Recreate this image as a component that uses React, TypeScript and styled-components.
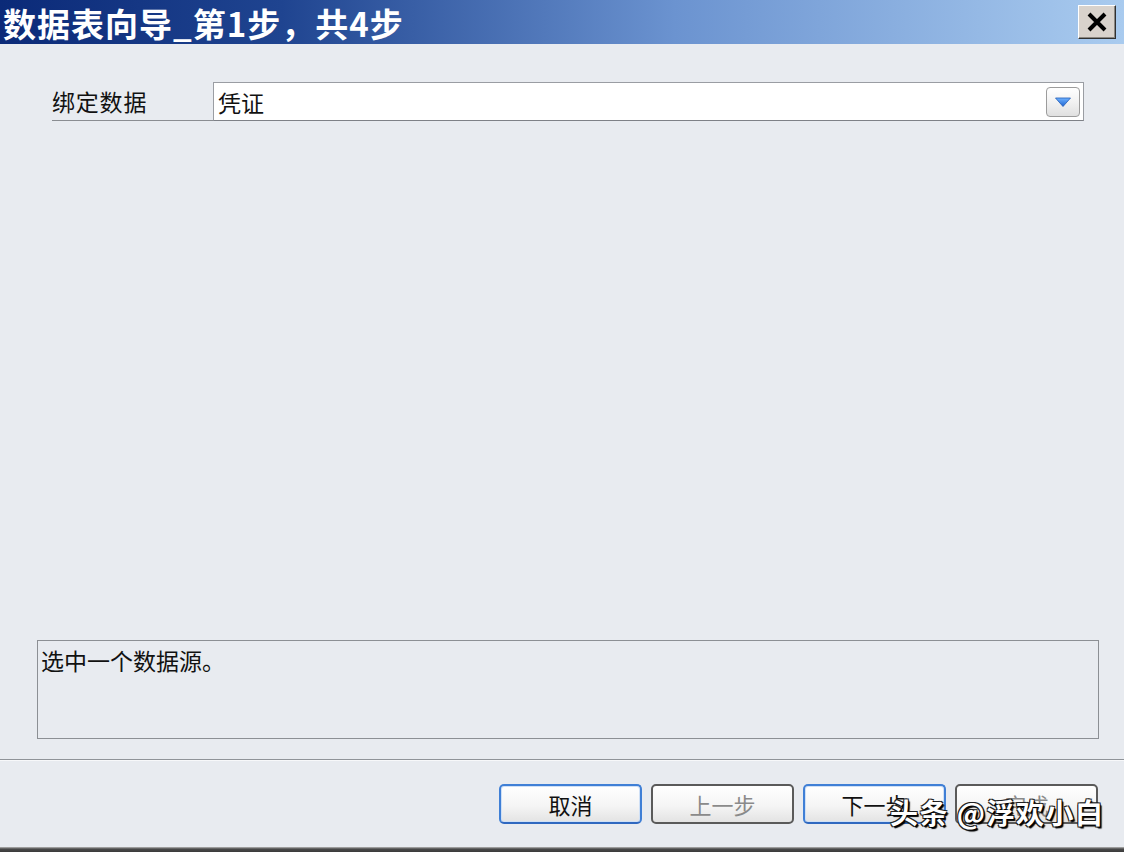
import React from "react";
import styled, { createGlobalStyle, css } from "styled-components";

const GlobalStyle = createGlobalStyle`
  html, body { margin: 0; padding: 0; }
  body {
    font-family: "Noto Sans CJK SC", "Noto Sans", sans-serif;
    background: #e7eaef;
  }
`;

const Window = styled.div`
  width: 1124px;
  height: 852px;
  display: flex;
  flex-direction: column;
  background: #e8ebf0;
  position: relative;
  overflow: hidden;
`;

const TitleBar = styled.div`
  height: 44px;
  flex: none;
  display: flex;
  align-items: center;
  justify-content: space-between;
  padding: 0 8px 0 3px;
  background: linear-gradient(90deg, #0b2a78 0%, #1f4490 25%, #6b93d0 60%, #a9cbef 100%);
`;

const Title = styled.h1`
  margin: 0;
  font-size: 33px;
  font-weight: 700;
  color: #ffffff;
  letter-spacing: 1px;
  line-height: 1;
  padding-top: 2px;
`;

const CloseButton = styled.button`
  width: 38px;
  height: 34px;
  padding: 0;
  display: flex;
  align-items: center;
  justify-content: center;
  background: #d8d2cc;
  border: 1px solid;
  border-color: #ffffff #303030 #303030 #ffffff;
  box-shadow: inset -1px -1px 0 #8a8680;
`;

const Main = styled.div`
  flex: 1;
  display: flex;
  flex-direction: column;
`;

const FieldRow = styled.div`
  display: flex;
  align-items: stretch;
  margin: 38px 40px 0 52px;
  height: 39px;
`;

const Label = styled.label`
  width: 161px;
  flex: none;
  display: flex;
  align-items: center;
  font-size: 23px;
  letter-spacing: 0.8px;
  color: #111;
  border-bottom: 1px solid #8a8d92;
  box-sizing: border-box;
`;

const SelectBox = styled.div`
  flex: 1;
  display: flex;
  align-items: center;
  justify-content: space-between;
  background: #ffffff;
  border: 1px solid #9a9da3;
  border-bottom-color: #7e8187;
  padding: 0 3px 0 4px;
  box-sizing: border-box;
`;

const SelectValue = styled.span`
  font-size: 23px;
  color: #111;
`;

const DropButton = styled.span`
  width: 34px;
  height: 30px;
  box-sizing: border-box;
  display: flex;
  align-items: center;
  justify-content: center;
  border: 1px solid #9c9c9c;
  border-radius: 4px;
  background: linear-gradient(180deg, #ffffff 0%, #f2f2f2 50%, #e0e0e0 100%);
`;

const Spacer = styled.div`
  flex: 1;
`;

const Description = styled.div`
  margin: 0 25px 0 37px;
  height: 99px;
  box-sizing: border-box;
  border: 1px solid #8c8f94;
  padding: 4px 3px;
  font-size: 23px;
  line-height: 30px;
  color: #111;
`;

const Separator = styled.hr`
  margin: 20px 0 0;
  border: none;
  border-top: 1px solid #8f9398;
  border-bottom: 1px solid #f7f8fa;
  height: 0;
`;

const ButtonBar = styled.div`
  display: flex;
  justify-content: flex-end;
  gap: 9px;
  padding: 23px 26px 0 0;
  height: 86px;
  box-sizing: border-box;
`;

const DialogButton = styled.button<{ $primary?: boolean; $disabled?: boolean }>`
  width: 143px;
  height: 40px;
  border-radius: 5px;
  font-family: "Noto Sans CJK SC", sans-serif;
  font-size: 22px;
  padding: 0;
  background: linear-gradient(180deg, #ffffff 0%, #f5f5f5 55%, #e3e3e3 100%);
  color: ${(p) => (p.$disabled ? "#8a8a8a" : "#111")};
  border: 2px solid #5a5a5a;
  ${(p) =>
    p.$primary &&
    css`
      border-color: #3f7fd6;
      border-bottom-color: #2f68c0;
      box-shadow: inset 0 0 0 1px #cfe0f6;
    `}
`;

const BottomEdge = styled.div`
  height: 5px;
  flex: none;
  background: linear-gradient(180deg, #b8b8b8 0%, #4a4a4a 40%, #3a3a3a 100%);
`;

const Watermark = styled.div`
  position: absolute;
  left: 890px;
  top: 792px;
  font-size: 28px;
  font-weight: 700;
  color: #ffffff;
  letter-spacing: 1.5px;
  text-shadow: 1px 1px 0 #000, -1px -1px 0 #222, 1px -1px 0 #222, -1px 1px 0 #222, 2px 2px 1px #000;
  white-space: nowrap;
  pointer-events: none;
`;

export default function App() {
  return (
    <>
      <GlobalStyle />
      <Window>
        <TitleBar>
          <Title>数据表向导_第1步，共4步</Title>
          <CloseButton aria-label="关闭">
            <svg width="22" height="20" viewBox="0 0 22 20">
              <path d="M3 2 L19 18 M19 2 L3 18" stroke="#000" strokeWidth="4" strokeLinecap="butt" />
            </svg>
          </CloseButton>
        </TitleBar>
        <Main>
          <FieldRow>
            <Label>绑定数据</Label>
            <SelectBox>
              <SelectValue>凭证</SelectValue>
              <DropButton>
                <svg width="16" height="10" viewBox="0 0 16 10">
                  <defs>
                    <linearGradient id="tri" x1="0" y1="0" x2="0" y2="1">
                      <stop offset="0" stopColor="#6fb2ff" />
                      <stop offset="1" stopColor="#1d63d0" />
                    </linearGradient>
                  </defs>
                  <path d="M0.5 1 L15.5 1 L8 9.5 Z" fill="url(#tri)" stroke="#1f5cb8" strokeWidth="0.8" />
                </svg>
              </DropButton>
            </SelectBox>
          </FieldRow>
          <Spacer />
          <Description>选中一个数据源。</Description>
          <Separator />
          <ButtonBar>
            <DialogButton $primary>取消</DialogButton>
            <DialogButton $disabled>上一步</DialogButton>
            <DialogButton $primary>下一步</DialogButton>
            <DialogButton $disabled>完成</DialogButton>
          </ButtonBar>
        </Main>
        <BottomEdge />
        <Watermark>头条 @浮欢小白</Watermark>
      </Window>
    </>
  );
}
